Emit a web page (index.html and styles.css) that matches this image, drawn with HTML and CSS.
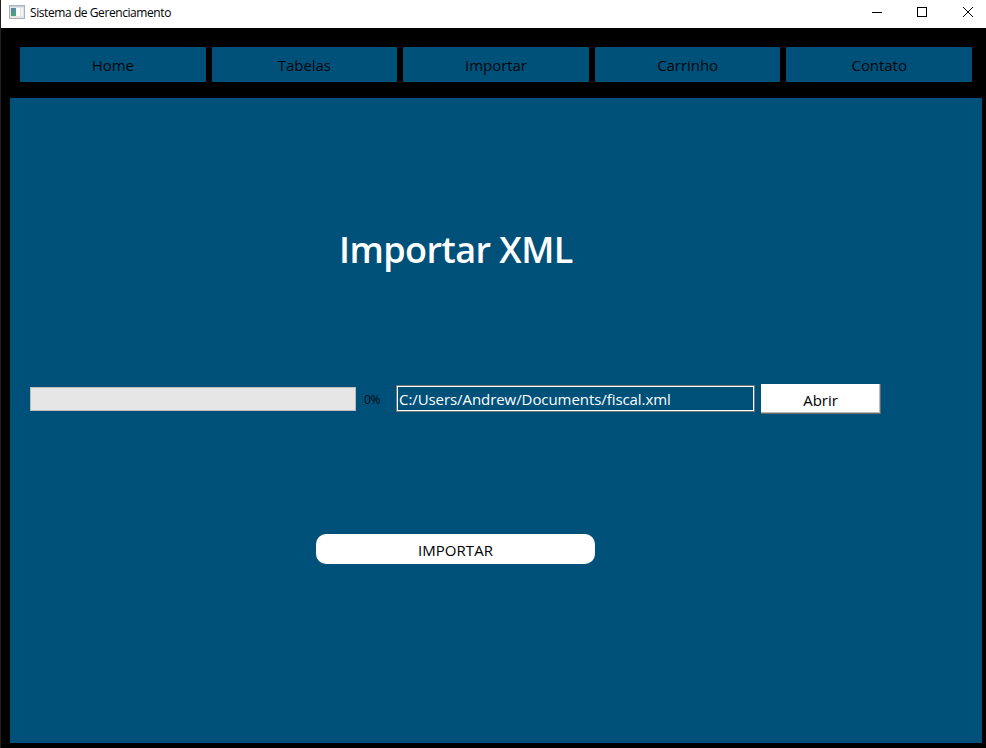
FILE: index.html
```html
<!DOCTYPE html>
<html lang="pt-BR">
<head>
<meta charset="utf-8">
<title>Sistema de Gerenciamento</title>
<link rel="stylesheet" href="styles.css">
</head>
<body>
<div class="window">
  <header class="titlebar">
    <svg class="app-icon" width="16" height="14" viewBox="0 0 16 14" shape-rendering="crispEdges">
      <defs><linearGradient id="pane" x1="0" y1="0" x2="0.6" y2="1"><stop offset="0" stop-color="#5581aa"/><stop offset="1" stop-color="#4fa477"/></linearGradient></defs>
      <rect width="16" height="14" fill="#aeb2b5"/>
      <rect x="1" y="1" width="14" height="12" fill="#e3e6e8"/>
      <rect x="1" y="1" width="14" height="1" fill="#c9ced3"/>
      <rect x="2" y="3" width="5" height="8" fill="url(#pane)"/>
      <rect x="7" y="3" width="4" height="8" fill="#fcfcfc"/>
      <rect x="12" y="3" width="2" height="8" fill="#f4f4f4"/>
    </svg>
    <span class="caption">Sistema de Gerenciamento</span>
    <svg class="controls" width="104" height="14" viewBox="0 0 104 14" fill="none" stroke="#000">
      <path d="M2 6.5h10" shape-rendering="crispEdges"/>
      <path d="M47.5 1.5h9v9h-9z" shape-rendering="crispEdges"/>
      <path d="M93 1l10 10M103 1l-10 10" stroke-width="1"/>
    </svg>
  </header>
  <nav class="nav">
    <button class="tab">Home</button>
    <button class="tab">Tabelas</button>
    <button class="tab">Importar</button>
    <button class="tab">Carrinho</button>
    <button class="tab">Contato</button>
  </nav>
  <main class="panel">
    <h1 class="title">Importar XML</h1>
    <div class="row">
      <div class="progress"></div>
      <span class="percent">0%</span>
      <div class="path"><span>C:/Users/Andrew/Documents/fiscal.xml</span></div>
      <button class="open">Abrir</button>
    </div>
    <button class="import">IMPORTAR</button>
  </main>
</div>
</body>
</html>
```
FILE: styles.css
```css
* { box-sizing: border-box; }
body { margin: 0; font-family: "Open Sans", "Noto Sans", sans-serif; overflow: hidden; }
button { border: 0; padding: 0; margin: 0; font-family: inherit; color: #000; }
.window { width: 986px; height: 748px; background: #000; border-left: 1px solid #202020; }
.titlebar { height: 28px; background: #fff; display: flex; padding-left: 8px; }
.app-icon { margin-top: 5px; }
.caption { margin-left: 5px; font-size: 12px; line-height: 26px; letter-spacing: -0.42px; white-space: nowrap; }
.controls { margin: 6px 12px 0 auto; }
.nav { display: grid; grid-template-columns: repeat(5, 1fr); gap: 6px; height: 35px; margin: 19px 14px 0 19px; }
.tab { background: #00517a; border-radius: 1px; font-size: 15px; line-height: 20px; padding-bottom: 0; color: #00080c; letter-spacing: -0.05px; }
.panel { width: 972px; height: 645px; margin: 16px 0 0 9px; background: #00517a; overflow: hidden; }
.title { margin: 126px 0 0 326px; width: 242px; height: 52px; font-size: 36px; line-height: 52px; font-weight: 600; letter-spacing: -0.55px; color: #fff; white-space: nowrap; text-indent: 3px; }
.row { display: flex; height: 30px; margin: 108px 0 0 20px; }
.progress { width: 326px; height: 24px; margin-top: 3px; background: #e6e6e6; border: 1px solid #bcbcbc; }
.percent { width: 32px; margin: 0 0 0 8px; font-size: 12px; line-height: 31px; letter-spacing: -0.3px; color: #000a10; }
.path { width: 359px; height: 27px; margin-top: 1px; border: 1px solid #767676; }
.path span { display: block; height: 25px; border: 1px solid #fff; padding-left: 1px; font-size: 15px; line-height: 24px; color: #fff; white-space: nowrap; letter-spacing: -0.07px; }
.open { width: 120px; height: 30px; margin-left: 6px; background: #fff; border: solid; border-width: 0 1px 1px 0; border-color: #696969; box-shadow: inset -1px -1px #b8b8b8; font-size: 15px; line-height: 20px; padding-top: 3px; letter-spacing: 0; }
.import { display: block; width: 279px; height: 30px; margin: 120px 0 0 306px; border-radius: 10px; background: #fff; font-size: 15px; line-height: 20px; padding-top: 2px; letter-spacing: 0.05px; }
```
